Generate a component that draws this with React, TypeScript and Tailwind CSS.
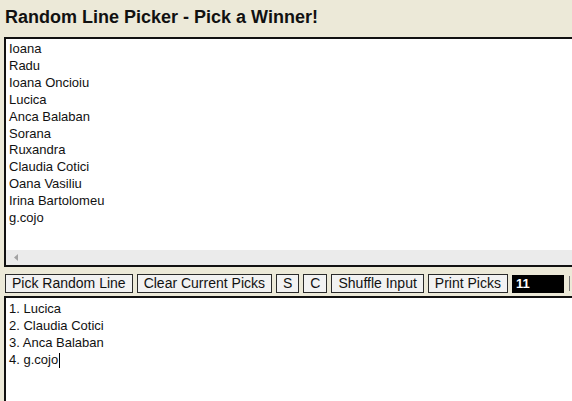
const names = [
  "Ioana",
  "Radu",
  "Ioana Oncioiu",
  "Lucica",
  "Anca Balaban",
  "Sorana",
  "Ruxandra",
  "Claudia Cotici",
  "Oana Vasiliu",
  "Irina Bartolomeu",
  "g.cojo",
];

const picks = ["1. Lucica", "2. Claudia Cotici", "3. Anca Balaban", "4. g.cojo"];

function Btn({ label }: { label: string }) {
  return (
    <button
      type="button"
      className="h-[19px] shrink-0 border border-[#2a2a2a] bg-[#f2f2f2] px-[6px] text-[14px] leading-[17px] text-[#111]"
    >
      {label}
    </button>
  );
}

export default function App() {
  return (
    <div
      className="h-[401px] w-[572px] overflow-hidden bg-[#ece9d8]"
      style={{ fontFamily: '"Liberation Sans", Arial, sans-serif' }}
    >
      <h1 className="pl-[5px] pt-[6px] text-[18px] font-bold leading-[22px] text-[#111]">
        Random Line Picker - Pick a Winner!
      </h1>

      <div className="ml-[4px] mt-[9px] flex h-[230px] w-[620px] flex-col border-2 border-[#111] bg-white">
        <div className="flex-1 px-[3px] pt-[2px] text-[13px] leading-[16.9px] text-[#111]">
          {names.map((n) => (
            <div key={n}>{n}</div>
          ))}
        </div>
        <div className="flex h-[15px] items-center bg-[#ebebeb] pl-[8px]">
          <svg width="5" height="7" viewBox="0 0 5 7">
            <path d="M4 0 L0 3.5 L4 7 Z" fill="#a3a3a3" />
          </svg>
        </div>
      </div>

      <div className="ml-[5px] mt-[7px] flex items-center gap-[4px] whitespace-nowrap">
        <Btn label="Pick Random Line" />
        <Btn label="Clear Current Picks" />
        <Btn label="S" />
        <Btn label="C" />
        <Btn label="Shuffle Input" />
        <Btn label="Print Picks" />
        <div className="h-[18px] w-[52px] shrink-0 bg-black pl-[4px] text-[13px] font-bold leading-[18px] text-white">
          11
        </div>
        <div className="ml-[1px] h-[15px] w-[10px] shrink-0 border-l border-[#777]" />
      </div>

      <div className="ml-[4px] mt-[3px] h-[120px] w-[620px] border-2 border-[#111] bg-white px-[3px] pt-[3px] text-[13px] leading-[16.9px] text-[#111]">
        {picks.map((p, i) => (
          <div key={p} className="flex items-center">
            {p}
            {i === picks.length - 1 && <span className="ml-[1px] inline-block h-[15px] w-px bg-black" />}
          </div>
        ))}
      </div>
    </div>
  );
}
